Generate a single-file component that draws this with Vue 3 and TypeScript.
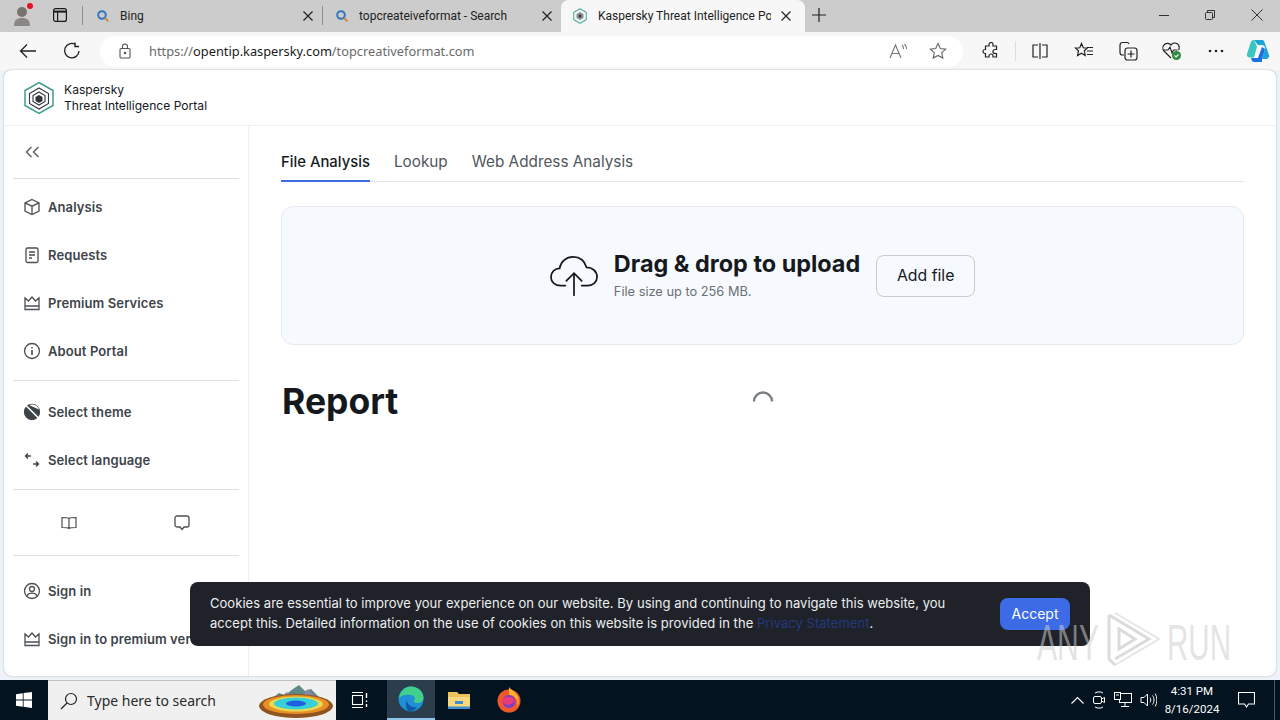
<script setup lang="ts">
interface BrowserTab {
  title: string
  kind: 'search' | 'kaspersky'
  active?: boolean
}

interface NavItem {
  label: string
  icon: string
}

const tabs: BrowserTab[] = [
  { title: 'Bing', kind: 'search' },
  { title: 'topcreateiveformat - Search', kind: 'search' },
  { title: 'Kaspersky Threat Intelligence Portal', kind: 'kaspersky', active: true }
]

const mainNav: NavItem[] = [
  { label: 'Analysis', icon: 'box' },
  { label: 'Requests', icon: 'doc' },
  { label: 'Premium Services', icon: 'crown' },
  { label: 'About Portal', icon: 'info' }
]

const settingsNav: NavItem[] = [
  { label: 'Select theme', icon: 'theme' },
  { label: 'Select language', icon: 'lang' }
]

const accountNav: NavItem[] = [
  { label: 'Sign in', icon: 'user' },
  { label: 'Sign in to premium version', icon: 'crown' }
]

const portalTabs = ['File Analysis', 'Lookup', 'Web Address Analysis']
</script>

<template>
  <div class="screen">
    <header class="tabstrip">
      <div class="profile">
        <svg width="24" height="24" viewBox="0 0 24 24">
          <circle cx="10" cy="9" r="5" fill="#77736f" />
          <path d="M2 23c0-6 3-8 8-8s8 2 8 8z" fill="#8b8784" />
          <circle cx="18" cy="3" r="3" fill="#e81123" />
        </svg>
      </div>
      <div class="tab-actions">
        <svg width="16" height="16" viewBox="0 0 16 16" fill="none" stroke="#1a1a1a" stroke-width="1.2">
          <rect x="1.6" y="1.6" width="12.8" height="12.8" rx="2" />
          <path d="M1.6 4.6h12.8" stroke-width="2" />
          <path d="M5.6 4.6v9.8" />
        </svg>
      </div>
      <div
        v-for="tab in tabs"
        :key="tab.title"
        :class="['tab', { 'tab--active': tab.active }]"
      >
        <svg v-if="tab.kind === 'search'" class="tab__icon" width="14" height="14" viewBox="0 0 14 14" fill="none">
          <circle cx="6" cy="6" r="3.8" stroke="#3277bc" stroke-width="2" />
          <path d="M9 9l3.4 3.4" stroke="#c98a3a" stroke-width="2" />
        </svg>
        <svg v-else class="tab__icon" width="16" height="16" viewBox="0 0 16 16" fill="none">
          <path d="M8 .8l6.3 3.6v7.2L8 15.2 1.7 11.6V4.4z" stroke="#5fb5a0" stroke-width="1.2" />
          <path d="M8 4l3.5 2v4L8 12l-3.5-2V6z" fill="#8a8f92" />
          <circle cx="8" cy="8" r="1.5" fill="#33383c" />
        </svg>
        <span class="tab__title">{{ tab.title }}</span>
        <svg class="tab__close" width="10" height="10" viewBox="0 0 10 10" stroke="#222" stroke-width="1.2">
          <path d="M.5.5l9 9M9.5.5l-9 9" />
        </svg>
      </div>
      <div class="new-tab">
        <svg width="14" height="14" viewBox="0 0 14 14" stroke="#222" stroke-width="1.2"><path d="M7 0v14M0 7h14" /></svg>
      </div>
      <div class="window-controls">
        <svg width="10" height="10" viewBox="0 0 10 10" stroke="#333"><path d="M0 5.5h10" /></svg>
        <svg width="10" height="10" viewBox="0 0 10 10" fill="none" stroke="#333">
          <rect x=".5" y="2.5" width="7" height="7" rx="1" />
          <path d="M2.5 2.5V.5h7v7H7.500" />
        </svg>
        <svg width="12" height="12" viewBox="0 0 12 12" stroke="#333"><path d="M.5.5l11 11M11.500.5l-11 11" /></svg>
      </div>
    </header>

    <nav class="toolbar">
      <div class="toolbar__btn toolbar__btn--back">
        <svg width="18" height="16" viewBox="0 0 18 16" fill="none" stroke="#222" stroke-width="1.3">
          <path d="M17 8H1.500M8 1.500L1.500 8 8 14.500" />
        </svg>
      </div>
      <div class="toolbar__btn toolbar__btn--reload">
        <svg width="18" height="18" viewBox="0 0 18 18" fill="none" stroke="#222" stroke-width="1.3">
          <path d="M12.500 2.500A7.200 7.200 0 1 0 16 9" />
          <path d="M12 .5v4h4" />
        </svg>
      </div>
      <div class="address">
        <svg width="12" height="16" viewBox="0 0 12 16" fill="none" stroke="#555" stroke-width="1.1">
          <rect x="1" y="5.5" width="10" height="9.5" rx="1" />
          <path d="M3.500 5.500V3.500a2.500 2.500 0 0 1 5 0v2" />
          <circle cx="6" cy="10" r=".7" fill="#555" />
        </svg>
        <span class="address__url">https://<b>opentip.kaspersky.com</b>/topcreativeformat.com</span>
        <svg class="address__read" width="20" height="16" viewBox="0 0 20 16" fill="none" stroke="#777" stroke-width="1.1">
          <path d="M1 15L6.500 2 12 15M3 10.500h7" />
          <path d="M13 2c1 1 1.500 2 1.500 4M15.500 1c1.300 1.300 2 3 2 5" />
        </svg>
        <svg width="18" height="18" viewBox="0 0 18 18" fill="none" stroke="#666" stroke-width="1.1">
          <path d="M9 1.500l2.300 5 5.400.6-4 3.600 1.100 5.400L9 13.400l-4.800 2.700 1.100-5.400-4-3.600 5.400-.6z" />
        </svg>
      </div>
      <div class="toolbar__tools">
        <span class="tool">
          <svg width="18" height="18" viewBox="0 0 18 18" fill="none" stroke="#222" stroke-width="1.2">
            <path d="M7 2.500a2 2 0 0 1 4 0V4h3.500v3.500H13a2 2 0 0 0 0 4h1.500V15H11v-1a2 2 0 0 0-4 0v1H3.500v-3.500H3a2 2 0 0 1 0-4h.5V4H7z" />
          </svg>
        </span>
        <i class="toolbar__sep"></i>
        <span class="tool">
          <svg width="18" height="16" viewBox="0 0 18 16" fill="none" stroke="#222" stroke-width="1.2">
            <path d="M7 2H2v12h5M11 2h5v12h-5M9 0v16" />
          </svg>
        </span>
        <span class="tool">
          <svg width="20" height="18" viewBox="0 0 20 18" fill="none" stroke="#222" stroke-width="1.2">
            <path d="M7.500 1.500l1.800 4.300 4 .3-3 2.700.9 4.700-3.700-2.300-3.900 2.300.9-4.700-3-2.700 4.300-.3zM13 5.500h6M13 9h6M13 12.500h6" />
          </svg>
        </span>
        <span class="tool">
          <svg width="20" height="20" viewBox="0 0 20 20" fill="none" stroke="#222" stroke-width="1.2">
            <path d="M6 14H4.500A2.500 2.500 0 0 1 2 11.500V4a2.500 2.500 0 0 1 2.500-2.500H9A2.500 2.500 0 0 1 11 3" />
            <rect x="7" y="7" width="12" height="12" rx="2.5" />
            <path d="M13 9.500v7M9.500 13h7" />
          </svg>
        </span>
        <span class="tool">
          <svg width="22" height="20" viewBox="0 0 22 20" fill="none">
            <path d="M10 17L3 10a4.500 4.500 0 0 1 7-6 4.500 4.500 0 0 1 7.500 5" stroke="#222" stroke-width="1.2" />
            <path d="M2.500 9H7l2-3 2 6 1.500-3h4" stroke="#222" stroke-width="1.1" />
            <circle cx="15.500" cy="14.500" r="4.500" fill="#2d8a3e" />
            <path d="M13.500 14.500l1.500 1.500 2.500-2.500" stroke="#fff" stroke-width="1.1" />
          </svg>
        </span>
        <span class="tool">
          <svg width="16" height="4" viewBox="0 0 16 4" fill="#222">
            <circle cx="2" cy="2" r="1.3" /><circle cx="8" cy="2" r="1.3" /><circle cx="14" cy="2" r="1.3" />
          </svg>
        </span>
        <span class="tool tool--copilot">
          <svg width="26" height="26" viewBox="0 0 26 26">
            <path d="M9 2h8c1 0 2 .6 2.300 1.700L24 17c.7 2-1 4-3 4h-4l3-10c.5-2-1-4-3-4h-4z" fill="#1aa4d8" />
            <path d="M9 2c-2 0-3 1-3.500 3L2 16c-.5 2 .8 3.500 2.500 3.500H9l3-11z" fill="#39c6c0" />
            <path d="M17 24H9c-1 0-2-.6-2.300-1.700L6 20h7l4-11 3 2-3 10z" fill="#1e6fe0" />
          </svg>
        </span>
      </div>
    </nav>

    <div class="page">
      <div class="portal-header">
        <svg width="32" height="34" viewBox="0 0 32 34" fill="none">
          <path d="M16 1.500l14 8v15l-14 8-14-8v-15z" stroke="#3f9f8c" stroke-width="1.5" />
          <path d="M16 7l9.500 5.500v10L16 28l-9.500-5.500v-10z" stroke="#30363b" stroke-width="1.1" />
          <path d="M16 11l6 3.500v6L16 24l-6-3.500v-6z" stroke="#30363b" stroke-width="1.1" />
          <path d="M16 14l3.500 2v4L16 22l-3.500-2v-4z" fill="#30363b" />
        </svg>
        <div class="portal-header__name">
          <span>Kaspersky</span>
          <span>Threat Intelligence Portal</span>
        </div>
      </div>

      <div class="portal-body">
        <aside class="sidebar">
          <div class="sidebar__collapse">
            <svg width="15" height="12" viewBox="0 0 15 12" fill="none" stroke="#5b6166" stroke-width="1.5">
              <path d="M6.500 1L1.500 6l5 5M13.500 1l-5 5 5 5" />
            </svg>
          </div>
          <hr class="sidebar__rule" />
          <div class="sidebar__group">
            <a v-for="item in mainNav" :key="item.label" class="nav-item">
              <svg class="nav-item__icon" width="18" height="18" viewBox="0 0 18 18" fill="none" stroke="#4a5055" stroke-width="1.3">
                <template v-if="item.icon === 'box'">
                  <path d="M9 1.500l7 3.300v8.400l-7 3.300-7-3.300V4.800z" /><path d="M2 4.800l7 3.400 7-3.400M9 8.200v8.300" />
                </template>
                <template v-else-if="item.icon === 'doc'">
                  <rect x="3" y="2" width="12" height="14.5" rx="1.5" /><path d="M6 6h6M6 9h6M6 12h3" />
                </template>
                <template v-else-if="item.icon === 'crown'">
                  <path d="M2 12V4l3.500 3L9 3l3.500 4L16 4v8zM2 12v3.500h14V12" />
                </template>
                <template v-else>
                  <circle cx="9" cy="9" r="7.5" /><path d="M9 8v5M9 5v1.400" stroke-width="1.6" />
                </template>
              </svg>
              {{ item.label }}
            </a>
          </div>
          <hr class="sidebar__rule" />
          <div class="sidebar__group sidebar__group--settings">
            <a v-for="item in settingsNav" :key="item.label" class="nav-item">
              <svg class="nav-item__icon" width="18" height="18" viewBox="0 0 18 18" fill="none" stroke="#3e444a" stroke-width="1.3">
                <template v-if="item.icon === 'theme'">
                  <circle cx="9" cy="9" r="7.5" fill="#3e444a" />
                  <path d="M3 2.500l12.500 12.500" stroke="#fff" stroke-width="1.6" />
                  <path d="M9 1.500a7.500 7.500 0 0 1 7 5L6 2z" fill="#fff" stroke="none" />
                </template>
                <template v-else>
                  <path d="M8 5H2.500M5 2.500L2.500 5 5 7.500M10 13h5.500M13 10.500l2.500 2.500-2.500 2.500" />
                </template>
              </svg>
              {{ item.label }}
            </a>
          </div>
          <hr class="sidebar__rule" />
          <div class="sidebar__links">
            <svg width="16" height="14" viewBox="0 0 16 14" fill="none" stroke="#4a5055" stroke-width="1.2">
              <path d="M8 2.500C6.500 1.500 4 1.500 1 1.500v10c3 0 5.500 0 7 1 1.500-1 4-1 7-1v-10c-3 0-5.500 0-7 1zM8 2.500v10" />
            </svg>
            <svg width="18" height="18" viewBox="0 0 18 18" fill="none" stroke="#4a5055" stroke-width="1.3">
              <path d="M4 2h10a2 2 0 0 1 2 2v7a2 2 0 0 1-2 2h-3l-2 2.500L7 13H4a2 2 0 0 1-2-2V4a2 2 0 0 1 2-2z" />
            </svg>
          </div>
          <hr class="sidebar__rule" />
          <div class="sidebar__group sidebar__group--account">
            <a v-for="item in accountNav" :key="item.label" class="nav-item">
              <svg class="nav-item__icon" width="18" height="18" viewBox="0 0 18 18" fill="none" stroke="#4a5055" stroke-width="1.3">
                <template v-if="item.icon === 'user'">
                  <circle cx="9" cy="9" r="7.5" /><circle cx="9" cy="7" r="2.5" /><path d="M3.800 14c1-2 3-2.800 5.200-2.800s4.200.8 5.200 2.800" />
                </template>
                <template v-else>
                  <path d="M2 12V4l3.500 3L9 3l3.500 4L16 4v8zM2 12v3.500h14V12" />
                </template>
              </svg>
              {{ item.label }}
            </a>
          </div>
        </aside>

        <main class="content">
          <div class="tabs">
            <span
              v-for="(name, i) in portalTabs"
              :key="name"
              :class="['tabs__item', { 'tabs__item--active': i === 0 }]"
            >{{ name }}</span>
          </div>

          <section class="dropzone">
            <svg width="48" height="42" viewBox="0 0 50 42" fill="none" stroke="#15191d" stroke-width="1.8" stroke-linecap="round">
              <path d="M16 31H11C5 31 1 27 1 22c0-5 4-9 9-9 1-7 7-12 14-12 7 0 12 4 14 11 6 0 11 4 11 10 0 5-4 9-10 9h-6" />
              <path d="M25 41V18M17 26l8-8 8 8" />
            </svg>
            <div class="dropzone__text">
              <h2>Drag &amp; drop to upload</h2>
              <p>File size up to 256 MB.</p>
            </div>
            <button class="dropzone__btn">Add file</button>
          </section>

          <section class="report">
            <h1>Report</h1>
            <svg class="report__spinner" width="22" height="14" viewBox="0 0 22 14" fill="none" stroke="#7b8084" stroke-width="2.4">
              <path d="M2 13.500a9 9 0 0 1 18 0" />
            </svg>
          </section>
        </main>
      </div>
    </div>

    <footer class="taskbar">
      <div class="taskbar__start">
        <svg width="16" height="16" viewBox="0 0 16 16" fill="#fff">
          <path d="M0 2.200l6.800-1v6.400H0zM7.600 1.100L16 0v7.600H7.600zM0 8.400h6.800v6.400l-6.800-1zM7.600 8.400H16V16l-8.400-1.200z" />
        </svg>
      </div>
      <div class="taskbar__search">
        <svg width="18" height="18" viewBox="0 0 18 18" fill="none" stroke="#222" stroke-width="1.2">
          <circle cx="11" cy="7" r="5.5" /><path d="M7 11l-6 6" />
        </svg>
        <span>Type here to search</span>
        <svg class="taskbar__doodle" width="74" height="36" viewBox="0 0 74 36">
          <path d="M12 16l8-6 6 2 8-6 6-4 6 6 6-2 6 6 6 6z" fill="#5f8a88" />
          <path d="M22 14l6-5 5 5zM44 12l5-6 7 8z" fill="#8d86a8" />
          <ellipse cx="37" cy="23" rx="37" ry="12" fill="#8f5420" />
          <ellipse cx="37" cy="21.5" rx="33" ry="9.5" fill="#e88f25" />
          <ellipse cx="37" cy="21" rx="27" ry="7.5" fill="#e8d94e" />
          <ellipse cx="37" cy="20.5" rx="22" ry="6" fill="#38d0d8" />
          <ellipse cx="37" cy="20.5" rx="10" ry="3" fill="#1f5ee0" />
        </svg>
      </div>
      <div class="taskbar__task">
        <svg width="17" height="16" viewBox="0 0 17 16" fill="none" stroke="#fff" stroke-width="1.1">
          <path d="M1 .5h11M1 15.500h11" /><rect x="1.5" y="3.5" width="10" height="9" />
          <path d="M15.500 1v5M15.500 8.500v1.500M15.500 12v3" stroke-width="1.4" />
        </svg>
      </div>
      <div class="taskbar__app taskbar__app--active">
        <svg width="26" height="26" viewBox="0 0 26 26">
          <circle cx="13" cy="13" r="12.5" fill="#1f8fd6" />
          <path d="M1 12C2 5 7 .5 13 .5c7 0 12.500 5 12.500 11.500 0 3-3 5-6 5-2 0-4-.7-4-2 2-1 2-5-2-6-5-1-10 0-12.500 3z" fill="#40d08c" />
          <path d="M9 14c0 5 5 8 10 7-2 3-5 4.500-8 4.200C8 24 7 18 9 14z" fill="#0c59a4" />
        </svg>
      </div>
      <div class="taskbar__app">
        <svg width="24" height="20" viewBox="0 0 24 20">
          <path d="M1 2h9l2 2h11v15H1z" fill="#e9c45b" />
          <rect x="1" y="7" width="22" height="12" fill="#f6d97d" />
          <rect x="8" y="11" width="8" height="3" fill="#3d8fd0" />
          <rect x="1" y="16.5" width="22" height="2.5" fill="#3d8fd0" />
        </svg>
      </div>
      <div class="taskbar__app taskbar__app--last">
        <svg width="24" height="26" viewBox="0 0 24 26">
          <circle cx="12" cy="14" r="11.5" fill="#f0582c" />
          <path d="M12 0c2 3 6 4 8 8 3 5 2 9 0 12C22 12 17 8 12 8z" fill="#ffb02e" />
          <circle cx="12" cy="14.5" r="6.5" fill="#7a3fc8" />
          <path d="M6 12c3-3 9-3 12 1-2 5-9 7-12 2z" fill="#e93a7d" />
        </svg>
      </div>
      <div class="taskbar__tray">
        <svg width="13" height="8" viewBox="0 0 13 8" fill="none" stroke="#fff" stroke-width="1.1"><path d="M.5 7.500l6-6 6 6" /></svg>
        <svg width="14" height="18" viewBox="0 0 14 18" fill="none" stroke="#fff">
          <path d="M3 2c2.500-1.500 6-1.500 8 0M3 16c2.500 1.500 6 1.500 8 0" />
          <rect x="1.5" y="5.5" width="8" height="7" rx="1.5" /><path d="M9.500 8l3-1.500v5l-3-1.500" />
        </svg>
        <svg width="18" height="16" viewBox="0 0 18 16" fill="none" stroke="#fff">
          <rect x="5.5" y="1.5" width="12" height="9" /><rect x=".5" y=".5" width="6" height="7" fill="#03131f" />
          <path d="M2 3h3M11 10.500v4M7 14.500h8" />
        </svg>
        <svg width="17" height="16" viewBox="0 0 17 16" fill="none" stroke="#fff">
          <path d="M1 5.500h3L7.500 2v12L4 10.500H1zM10 5.500c1 1.500 1 3.500 0 5M12.500 3.500c2 2.500 2 6.500 0 9M15 1.500c2.500 3.500 2.500 9.500 0 13" />
        </svg>
      </div>
      <div class="taskbar__clock">
        <span>4:31 PM</span>
        <span>8/16/2024</span>
      </div>
      <div class="taskbar__notify">
        <svg width="17" height="16" viewBox="0 0 17 16" fill="none" stroke="#fff" stroke-width="1.1">
          <path d="M.5.5h16v11.500h-6L8.500 15 6.500 12h-6z" />
        </svg>
      </div>
      <div class="taskbar__desktop"></div>
    </footer>

    <div class="cookie">
      <p class="cookie__text">
        Cookies are essential to improve your experience on our website. By using and continuing to navigate this website, you accept this. Detailed information on the use of cookies on this website is provided in the <a>Privacy Statement</a>.
      </p>
      <button class="cookie__accept">Accept</button>
    </div>

    <svg class="watermark" width="196" height="62" viewBox="0 0 196 62" fill="none">
      <text x="0" y="51" textLength="62" lengthAdjust="spacingAndGlyphs">ANY</text>
      <path d="M72 6v44l6 6M72 6l40 24-34 20M82 20l16 10-16 10z" stroke="rgba(190,190,190,.55)" stroke-width="3" />
      <path d="M78 56l44-26-44-26" stroke="rgba(190,190,190,.4)" stroke-width="2" />
      <text x="130" y="51" textLength="64" lengthAdjust="spacingAndGlyphs">RUN</text>
    </svg>
  </div>
</template>

<style scoped>
.screen {
  position: relative;
  width: 1280px;
  height: 720px;
  display: flex;
  flex-direction: column;
  overflow: hidden;
  background: #eef3f9;
  font-family: Inter, "Liberation Sans", sans-serif;
  color: #15191d;
}

/* browser chrome */
.tabstrip {
  height: 32px;
  flex-shrink: 0;
  display: flex;
  align-items: stretch;
  background: #cccccc;
  font-family: Roboto, "Liberation Sans", sans-serif;
  font-size: 12px;
}

.profile {
  width: 44px;
  padding: 3px 0 0 12px;
  box-sizing: border-box;
}

.tab-actions {
  width: 46px;
  display: flex;
  align-items: center;
  padding: 0 0 2px 8px;
  box-sizing: border-box;
  position: relative;
}

.tab-actions::after {
  content: "";
  position: absolute;
  right: 7px;
  top: 6px;
  height: 19px;
  width: 1px;
  background: #8f8f8f;
}

.tab {
  position: relative;
  display: flex;
  align-items: center;
  width: 233px;
  padding: 0 10px 1px 6px;
  box-sizing: border-box;
  color: #222;
}

.tab + .tab {
  width: 238px;
  padding: 0 9px 1px 12px;
}

.tab:nth-of-type(3)::after {
  content: "";
  position: absolute;
  right: 0;
  top: 6px;
  height: 19px;
  width: 1px;
  background: #8f8f8f;
}

.tab + .tab.tab--active {
  width: 244px;
  padding: 0 14px 1px 11px;
  background: #f7f7f7;
  border-radius: 8px 8px 0 0;
}

.tab__icon {
  flex-shrink: 0;
  margin-right: 10px;
}

.tab__title {
  flex: 1;
  overflow: hidden;
  white-space: nowrap;
  min-width: 0;
  margin-right: 10px;
}

.new-tab {
  width: 21px;
  display: flex;
  align-items: center;
  justify-content: flex-end;
  padding-bottom: 2px;
}

.window-controls {
  margin-left: auto;
  width: 121px;
  padding: 0 17px 2px 0;
  box-sizing: border-box;
  display: flex;
  align-items: center;
  justify-content: space-between;
}

.toolbar {
  height: 38px;
  flex-shrink: 0;
  display: flex;
  align-items: center;
  background: #f7f7f7;
  box-sizing: border-box;
}

.toolbar__btn {
  display: flex;
  align-items: center;
  justify-content: center;
}

.toolbar__btn--back {
  width: 56px;
}

.toolbar__btn--reload {
  width: 32px;
}

.address {
  width: 863px;
  height: 31px;
  margin-left: 12px;
  padding: 0 16px 0 19px;
  box-sizing: border-box;
  display: flex;
  align-items: center;
  background: #fff;
  border-radius: 16px;
}

.address__url {
  margin-left: 18px;
  flex: 1;
  font-family: "Noto Sans", "Liberation Sans", sans-serif;
  font-size: 12.8px;
  color: #6a6a6a;
}

.address__url b {
  font-weight: 400;
  color: #1a1a1a;
}

.address__read {
  margin-right: 20px;
}

.toolbar__tools {
  flex: 1;
  display: flex;
  align-items: center;
  padding-left: 6px;
}

.tool {
  width: 44px;
  flex-shrink: 0;
  display: flex;
  align-items: center;
  justify-content: center;
}

.tool--copilot {
  width: 40px;
}

.toolbar__sep {
  width: 1px;
  height: 20px;
  margin: 0 2px;
  background: #ddd;
}

.page {
  width: 1272px;
  height: 606px;
  margin-left: 4px;
  flex-shrink: 0;
  display: flex;
  flex-direction: column;
  box-sizing: border-box;
  background: #fff;
  border-radius: 8px;
  box-shadow: 0 0 2px rgba(0, 0, 0, 0.3);
}

.portal-header {
  height: 56px;
  flex-shrink: 0;
  display: flex;
  align-items: center;
  gap: 9px;
  padding-left: 19px;
  border-bottom: 1px solid #eceef0;
  box-sizing: border-box;
}

.portal-header__name {
  display: flex;
  flex-direction: column;
  font-size: 12.1px;
  line-height: 16px;
  color: #15191d;
}

.portal-body {
  flex: 1;
  display: flex;
  min-height: 0;
}

.sidebar {
  width: 245px;
  flex-shrink: 0;
  padding: 0 9px;
  box-sizing: border-box;
  border-right: 1px solid #eceef0;
  overflow: hidden;
}

.sidebar__collapse {
  height: 52px;
  display: flex;
  align-items: center;
  padding-left: 12px;
}

.sidebar__rule {
  margin: 0;
  border: 0;
  border-top: 1px solid #dcdfe2;
}

.sidebar__group {
  padding: 4px 0 5px;
}

.sidebar__group--settings {
  padding: 7px 0 5px;
}

.sidebar__group--account {
  padding: 11px 0 0;
}

.nav-item {
  height: 48px;
  display: flex;
  align-items: center;
  gap: 7px;
  padding-left: 10px;
  font-size: 13px;
  font-weight: 600;
  letter-spacing: 0.1px;
  color: #3e444a;
  white-space: nowrap;
}

.sidebar__links {
  height: 65px;
  display: flex;
  align-items: center;
  justify-content: space-around;
}

.content {
  flex: 1;
  min-width: 0;
  padding: 0 32px;
}

.tabs {
  display: flex;
  gap: 24px;
  height: 55px;
  align-items: flex-end;
  border-bottom: 1px solid #e3e5e8;
}

.tabs__item {
  height: 30px;
  box-sizing: border-box;
  font-size: 15.3px;
  line-height: 20px;
  margin-bottom: -1px;
  color: #50565b;
}

.tabs__item--active {
  color: #15191d;
  font-size: 14.85px;
  font-weight: 500;
  border-bottom: 2px solid #3d6be5;
}

.dropzone {
  height: 139px;
  margin-top: 24px;
  display: flex;
  align-items: center;
  justify-content: center;
  gap: 16px;
  box-sizing: border-box;
  background: #f6f9fd;
  border: 1px solid #e7eaee;
  border-radius: 12px;
}

.dropzone__text h2 {
  margin: 0;
  font-size: 23.4px;
  line-height: 28px;
  font-weight: 700;
}

.dropzone__text p {
  margin: 5px 0 0;
  font-size: 12.8px;
  line-height: 18px;
  color: #6a7075;
}

.dropzone__btn {
  width: 99px;
  height: 42px;
  background: transparent;
  border: 1px solid #c6cbd0;
  border-radius: 8px;
  font-family: inherit;
  font-size: 15.8px;
  color: #15191d;
}

.report {
  position: relative;
  margin-top: 34px;
}

.report h1 {
  margin: 0;
  padding-left: 1px;
  font-size: 35.5px;
  line-height: 46px;
  font-weight: 700;
}

.report__spinner {
  position: absolute;
  left: 471px;
  top: 9px;
}

.taskbar {
  height: 40px;
  margin-top: auto;
  flex-shrink: 0;
  display: flex;
  align-items: center;
  background: #03131f;
  font-family: "Noto Sans", "Liberation Sans", sans-serif;
}

.taskbar__start {
  width: 48px;
  display: flex;
  justify-content: center;
}

.taskbar__search {
  width: 288px;
  height: 40px;
  box-sizing: border-box;
  padding-left: 12px;
  display: flex;
  align-items: center;
  gap: 9px;
  background: #f0f0f0;
  border-top: 1px solid #c0c0c0;
  font-size: 14px;
  color: #2a2a2a;
}

.taskbar__doodle {
  margin-left: auto;
  margin-right: 3px;
}

.taskbar__task {
  width: 51px;
  padding-right: 4px;
  box-sizing: border-box;
  display: flex;
  justify-content: center;
}

.taskbar__app {
  width: 48px;
  height: 40px;
  display: flex;
  align-items: center;
  justify-content: center;
  box-sizing: border-box;
}

.taskbar__app--active {
  background: #2c3e4c;
  border-bottom: 2px solid #8ec6ea;
}

.taskbar__app--last {
  margin-left: 2px;
}

.taskbar__tray {
  margin-left: auto;
  width: 86px;
  display: flex;
  align-items: center;
  justify-content: space-between;
}

.taskbar__clock {
  width: 70px;
  display: flex;
  flex-direction: column;
  align-items: center;
  font-family: Roboto, "Liberation Sans", sans-serif;
  font-size: 11.5px;
  line-height: 18px;
  color: #fff;
}

.taskbar__notify {
  width: 38px;
  display: flex;
  justify-content: center;
}

.taskbar__desktop {
  width: 5px;
  height: 40px;
  margin: 0 0 0 9px;
  box-sizing: content-box;
  border-left: 1px solid #4a5660;
}

/* overlays */
.cookie {
  position: absolute;
  left: 190px;
  top: 582px;
  width: 900px;
  height: 64px;
  padding: 0 20px;
  box-sizing: border-box;
  display: flex;
  align-items: center;
  justify-content: space-between;
  background: #1f2329;
  border-radius: 8px;
}

.cookie__text {
  margin: 0 0 2px;
  width: 745px;
  font-size: 13px;
  letter-spacing: 0.04px;
  line-height: 20px;
  color: #eceef0;
}

.cookie__text a {
  color: #24387f;
}

.cookie__accept {
  width: 70px;
  height: 32px;
  border: 0;
  border-radius: 8px;
  background: #3d6be5;
  color: #fff;
  font-family: inherit;
  font-size: 14px;
  padding-bottom: 2px;
}

.watermark {
  position: absolute;
  left: 1037px;
  top: 609px;
  pointer-events: none;
}

.watermark text {
  font-family: "Liberation Sans", sans-serif;
  font-size: 50px;
  fill: rgba(205, 205, 205, 0.55);
}
</style>
